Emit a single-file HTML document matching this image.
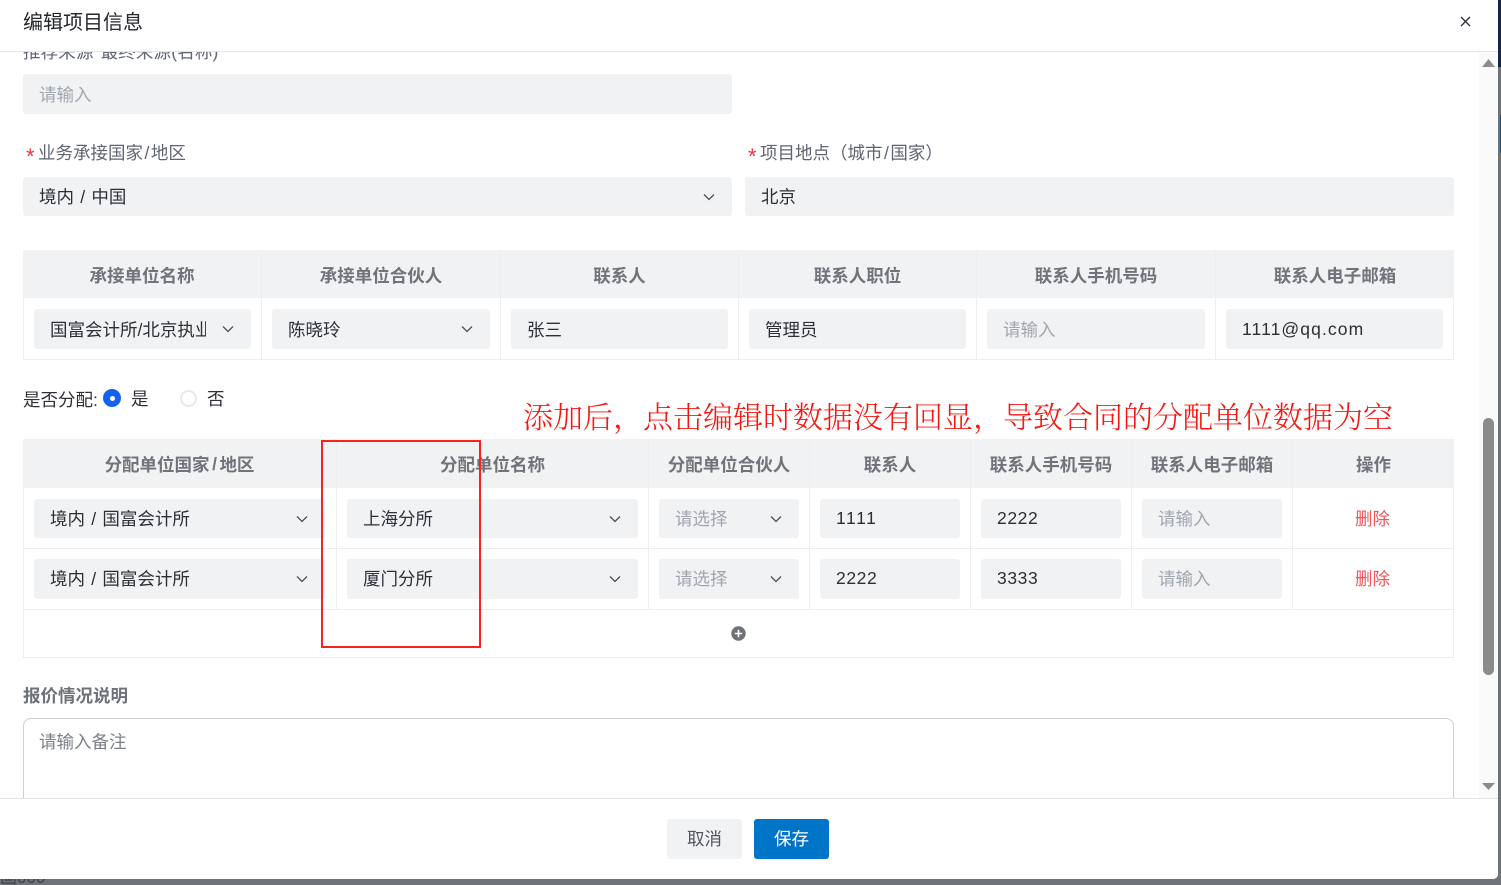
<!DOCTYPE html>
<html lang="zh"><head><meta charset="utf-8"><title>编辑项目信息</title>
<style>
html,body{margin:0;padding:0;width:1501px;height:885px;overflow:hidden;background:#6f7279}
*{box-sizing:border-box}
body{position:relative;font-family:"Liberation Sans","Noto Sans CJK SC",sans-serif;font-size:17.5px;color:#2b2f36}
.a{position:absolute}
.t{position:absolute;white-space:nowrap;line-height:24px}
.f{position:absolute;background:#f1f2f4;border-radius:3px;padding-left:16px;display:flex;align-items:center;white-space:nowrap;overflow:hidden}
.p{color:#a0a6ae}
.h{position:absolute;display:flex;align-items:center;justify-content:center;font-weight:700;color:#70747a;white-space:nowrap;background:#f1f2f4;padding-top:1px}
.h2{padding-top:2px}
.l{position:absolute;background:#eceef0}
.lab{color:#5e6570}
.chev{position:absolute;right:17px;top:50%;margin-top:-4px;width:12px;height:8px}
.chev path{fill:none;stroke:#4b5058;stroke-width:1.3}
.del{position:absolute;color:#f0565a;white-space:nowrap;line-height:24px}
.s{padding:0 1.5px}
.w{word-spacing:1.4px}
.r2{padding-bottom:1px}
.req{position:absolute;white-space:nowrap;line-height:24px;color:#f5343a;font-size:22px}
</style></head><body>
<div class="a" style="left:1498px;top:0;width:3px;height:67px;background:#12264d"></div>
<div class="a" style="left:1500px;top:115px;width:1px;height:38px;background:#14507f"></div>
<div class="a" style="left:0;top:879px;width:60px;height:6px;overflow:hidden;color:#3e4147;font-size:17px;line-height:12px;padding-left:0"><span style="position:absolute;left:0;top:-7px;white-space:nowrap">画000</span></div>

<div class="a" id="m" style="left:0;top:0;width:1498px;height:879px;background:#fff;border-bottom-right-radius:5px;overflow:hidden">
  <!-- scrolling content -->
  <div class="t lab" style="left:23px;top:40px;word-spacing:2px;letter-spacing:.15px">推荐来源  最终来源(名称)</div>
  <div class="f p" style="left:23px;top:74px;width:709px;height:40px">请输入</div>

  <div class="req" style="left:26px;top:145px">*</div>
  <div class="t lab" style="left:38px;top:141px">业务承接国家<span class="s">/</span>地区</div>
  <div class="req" style="left:748px;top:145px">*</div>
  <div class="t lab" style="left:760px;top:141px">项目地点（城市<span class="s">/</span>国家）</div>
  <div class="f w" style="left:23px;top:177px;width:709px;height:39px">境内 / 中国<svg class="chev" viewBox="0 0 12 8"><path d="M1 1.5 6 6.5 11 1.5"/></svg></div>
  <div class="f" style="left:745px;top:177px;width:709px;height:39px">北京</div>

  <!-- table 1 -->
  <div class="a" style="left:23px;top:250px;width:1431px;height:110px;border:1px solid #eceef0;border-top:0"></div>
  <div class="h h2" style="left:23px;top:250px;width:238px;height:48px">承接单位名称</div>
  <div class="h h2" style="left:262px;top:250px;width:238px;height:48px">承接单位合伙人</div>
  <div class="h h2" style="left:501px;top:250px;width:237px;height:48px">联系人</div>
  <div class="h h2" style="left:739px;top:250px;width:237px;height:48px">联系人职位</div>
  <div class="h h2" style="left:977px;top:250px;width:238px;height:48px">联系人手机号码</div>
  <div class="h h2" style="left:1216px;top:250px;width:238px;height:48px">联系人电子邮箱</div>
  <div class="l" style="left:261px;top:250px;width:1px;height:110px"></div>
  <div class="l" style="left:500px;top:250px;width:1px;height:110px"></div>
  <div class="l" style="left:738px;top:250px;width:1px;height:110px"></div>
  <div class="l" style="left:976px;top:250px;width:1px;height:110px"></div>
  <div class="l" style="left:1215px;top:250px;width:1px;height:110px"></div>
  <div class="f" style="left:34px;top:309px;width:217px;height:40px"><span style="display:block;width:156px;overflow:hidden;flex:none">国富会计所/北京执业</span><svg class="chev" viewBox="0 0 12 8"><path d="M1 1.5 6 6.5 11 1.5"/></svg></div>
  <div class="f" style="left:272px;top:309px;width:218px;height:40px">陈晓玲<svg class="chev" viewBox="0 0 12 8"><path d="M1 1.5 6 6.5 11 1.5"/></svg></div>
  <div class="f" style="left:511px;top:309px;width:217px;height:40px">张三</div>
  <div class="f" style="left:749px;top:309px;width:217px;height:40px">管理员</div>
  <div class="f p" style="left:987px;top:309px;width:218px;height:40px">请输入</div>
  <div class="f" style="left:1226px;top:309px;width:217px;height:40px;letter-spacing:1.1px">1111@qq.com</div>

  <!-- radio -->
  <div class="t" style="left:23px;top:388px">是否分配:</div>
  <div class="a" style="left:103px;top:389px;width:18px;height:18px;border-radius:50%;background:#1463f0"></div>
  <div class="a" style="left:109.5px;top:395.5px;width:5px;height:5px;border-radius:50%;background:#fff"></div>
  <div class="t" style="left:131px;top:387px">是</div>
  <div class="a" style="left:180px;top:390px;width:17px;height:17px;border-radius:50%;border:2px solid #e6e8ec;background:#fff"></div>
  <div class="t" style="left:207px;top:387px">否</div>

  <div class="t" style="left:523px;top:401px;font-family:'Liberation Serif','Noto Serif CJK SC',serif;font-size:30px;line-height:36px;color:#f5170f;font-weight:300">添加后，点击编辑时数据没有回显，导致合同的分配单位数据为空</div>

  <!-- table 2 -->
  <div class="a" style="left:23px;top:439px;width:1431px;height:219px;border:1px solid #eceef0;border-top:0"></div>
  <div class="h" style="left:23px;top:439px;width:313px;height:49px">分配单位国家<span class="s" style="padding:0 2.5px">/</span>地区</div>
  <div class="h" style="left:337px;top:439px;width:311px;height:49px">分配单位名称</div>
  <div class="h" style="left:649px;top:439px;width:160px;height:49px">分配单位合伙人</div>
  <div class="h" style="left:810px;top:439px;width:160px;height:49px">联系人</div>
  <div class="h" style="left:971px;top:439px;width:160px;height:49px">联系人手机号码</div>
  <div class="h" style="left:1132px;top:439px;width:160px;height:49px">联系人电子邮箱</div>
  <div class="h" style="left:1293px;top:439px;width:161px;height:49px">操作</div>
  <div class="l" style="left:336px;top:439px;width:1px;height:170px"></div>
  <div class="l" style="left:648px;top:439px;width:1px;height:170px"></div>
  <div class="l" style="left:809px;top:439px;width:1px;height:170px"></div>
  <div class="l" style="left:970px;top:439px;width:1px;height:170px"></div>
  <div class="l" style="left:1131px;top:439px;width:1px;height:170px"></div>
  <div class="l" style="left:1292px;top:439px;width:1px;height:170px"></div>
  <div class="l" style="left:23px;top:548px;width:1431px;height:1px"></div>
  <div class="l" style="left:23px;top:609px;width:1431px;height:1px"></div>

  <div class="f w" style="left:34px;top:499px;width:291px;height:39px">境内 / 国富会计所<svg class="chev" viewBox="0 0 12 8"><path d="M1 1.5 6 6.5 11 1.5"/></svg></div>
  <div class="f" style="left:347px;top:499px;width:291px;height:39px">上海分所<svg class="chev" viewBox="0 0 12 8"><path d="M1 1.5 6 6.5 11 1.5"/></svg></div>
  <div class="f p" style="left:659px;top:499px;width:140px;height:39px">请选择<svg class="chev" viewBox="0 0 12 8"><path d="M1 1.5 6 6.5 11 1.5"/></svg></div>
  <div class="f" style="left:820px;top:499px;width:140px;height:39px;letter-spacing:1.6px">1111</div>
  <div class="f" style="left:981px;top:499px;width:140px;height:39px;letter-spacing:.6px">2222</div>
  <div class="f p" style="left:1142px;top:499px;width:140px;height:39px">请输入</div>
  <div class="del" style="left:1355px;top:507px">删除</div>

  <div class="f w r2" style="left:34px;top:559px;width:291px;height:40px">境内 / 国富会计所<svg class="chev" viewBox="0 0 12 8"><path d="M1 1.5 6 6.5 11 1.5"/></svg></div>
  <div class="f r2" style="left:347px;top:559px;width:291px;height:40px">厦门分所<svg class="chev" viewBox="0 0 12 8"><path d="M1 1.5 6 6.5 11 1.5"/></svg></div>
  <div class="f p r2" style="left:659px;top:559px;width:140px;height:40px">请选择<svg class="chev" viewBox="0 0 12 8"><path d="M1 1.5 6 6.5 11 1.5"/></svg></div>
  <div class="f r2" style="left:820px;top:559px;width:140px;height:40px;letter-spacing:.6px">2222</div>
  <div class="f r2" style="left:981px;top:559px;width:140px;height:40px;letter-spacing:.6px">3333</div>
  <div class="f p r2" style="left:1142px;top:559px;width:140px;height:40px">请输入</div>
  <div class="del" style="left:1355px;top:567px">删除</div>

  <svg class="a" style="left:731px;top:626px" width="15" height="15" viewBox="0 0 15 15"><circle cx="7.5" cy="7.5" r="7.2" fill="#6e7176"/><path d="M3.8 7.5H11.2M7.5 3.8V11.2" stroke="#fff" stroke-width="1.6"/></svg>

  <div class="a" style="left:321px;top:440px;width:160px;height:208px;border:2px solid #f5241c"></div>

  <div class="t" style="left:23px;top:684px;font-weight:700;color:#6e7278;font-size:17.5px">报价情况说明</div>
  <div class="a" style="left:23px;top:718px;width:1431px;height:120px;border:1px solid #cdcfd2;border-radius:8px;background:#fff"></div>
  <div class="t" style="left:39px;top:730px;color:#7c8087">请输入备注</div>

  <!-- scrollbar -->
  <div class="a" style="left:1479px;top:52px;width:19px;height:746px;background:#fafafa"></div>
  <div class="a" style="left:1483px;top:418px;width:11px;height:257px;background:#8b8b8b;border-radius:6px"></div>
  <svg class="a" style="left:1481px;top:59px" width="15" height="9"><path d="M7.5 0 14 8H1Z" fill="#8c8c8c"/></svg>
  <svg class="a" style="left:1481px;top:782px" width="15" height="9"><path d="M1 1H14L7.5 8Z" fill="#8c8c8c"/></svg>

  <!-- header -->
  <div class="a" style="left:0;top:0;width:1498px;height:52px;background:#fff;border-bottom:1px solid #e4e5e7"></div>
  <div class="t" style="left:23px;top:10px;font-size:20px;line-height:26px;color:#23262b">编辑项目信息</div>
  <svg class="a" style="left:1460px;top:16px" width="11" height="11" viewBox="0 0 11 11"><path d="M1 1 10 10M10 1 1 10" stroke="#2a2e38" stroke-width="1.3" fill="none"/></svg>

  <!-- footer -->
  <div class="a" style="left:0;top:798px;width:1498px;height:81px;background:#fff;border-top:1px solid #e4e5ea"></div>
  <div class="a" style="left:667px;top:819px;width:75px;height:40px;background:#f1f2f4;border-radius:3px;display:flex;align-items:center;justify-content:center;color:#50555e;padding-bottom:1px">取消</div>
  <div class="a" style="left:754px;top:819px;width:75px;height:40px;background:#0075c8;border-radius:3px;display:flex;align-items:center;justify-content:center;color:#fff;padding-bottom:1px">保存</div>
</div>
</body></html>
